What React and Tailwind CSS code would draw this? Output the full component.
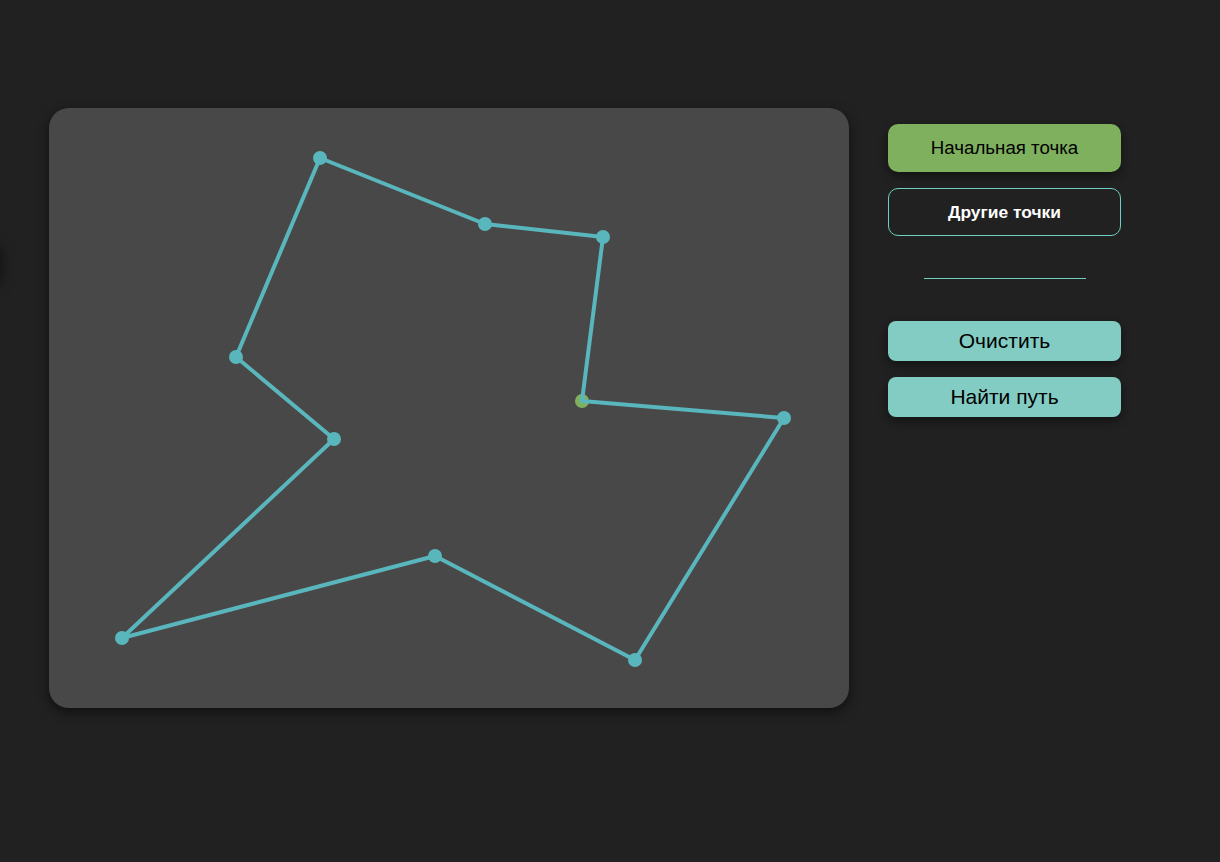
const start = [533, 293];
const pts = [
  [533, 293], [554, 129], [436, 116], [271, 50], [187, 249],
  [285, 331], [73, 530], [386, 448], [586, 552], [735, 310],
];

export default function App() {
  const path = pts.map((p) => p.join(',')).join(' ');
  return (
    <div className="relative min-h-[862px] overflow-hidden bg-[#212121] font-['Liberation_Sans',Arial,sans-serif]">
      {/* offscreen panel shadow at left edge */}
      <div className="absolute left-[-40px] top-[245px] h-[40px] w-[40px] rounded-lg shadow-[0_0_14px_rgba(0,0,0,0.6)]" />
      <div className="flex items-start pl-[49px] pt-[108px]">
        <div className="h-[600px] w-[800px] rounded-[20px] bg-[#484848] shadow-[0_4px_12px_rgba(0,0,0,0.55)]">
          <svg width="800" height="600" viewBox="0 0 800 600">
            <circle cx={start[0]} cy={start[1]} r="7" fill="#7fb05e" />
            <polygon points={path} fill="none" stroke="#5ab6bd" strokeWidth="4" strokeLinejoin="round" />
            {pts.slice(1).map(([x, y], i) => (
              <circle key={i} cx={x} cy={y} r="7" fill="#5ab6bd" />
            ))}
          </svg>
        </div>
        <div className="ml-[39px] mt-4 flex w-[233px] flex-col items-center">
          <button className="h-12 w-full rounded-[10px] bg-[#7fb05e] text-[18.7px] text-black shadow-[0_4px_10px_rgba(0,0,0,0.45)]">
            Начальная точка
          </button>
          <button className="mt-4 h-12 w-full rounded-[10px] border border-[#6fcfc3] bg-transparent text-[17.4px] font-bold text-white">
            Другие точки
          </button>
          <div className="mt-[42px] h-px w-[162px] bg-[#6fcfc3]" />
          <button className="mt-[42px] h-10 w-full rounded-[8px] bg-[#82ccc4] text-[21px] text-black shadow-[0_4px_10px_rgba(0,0,0,0.45)]">
            Очистить
          </button>
          <button className="mt-4 h-10 w-full rounded-[8px] bg-[#82ccc4] text-[21px] text-black shadow-[0_4px_10px_rgba(0,0,0,0.45)]">
            Найти путь
          </button>
        </div>
      </div>
    </div>
  );
}
